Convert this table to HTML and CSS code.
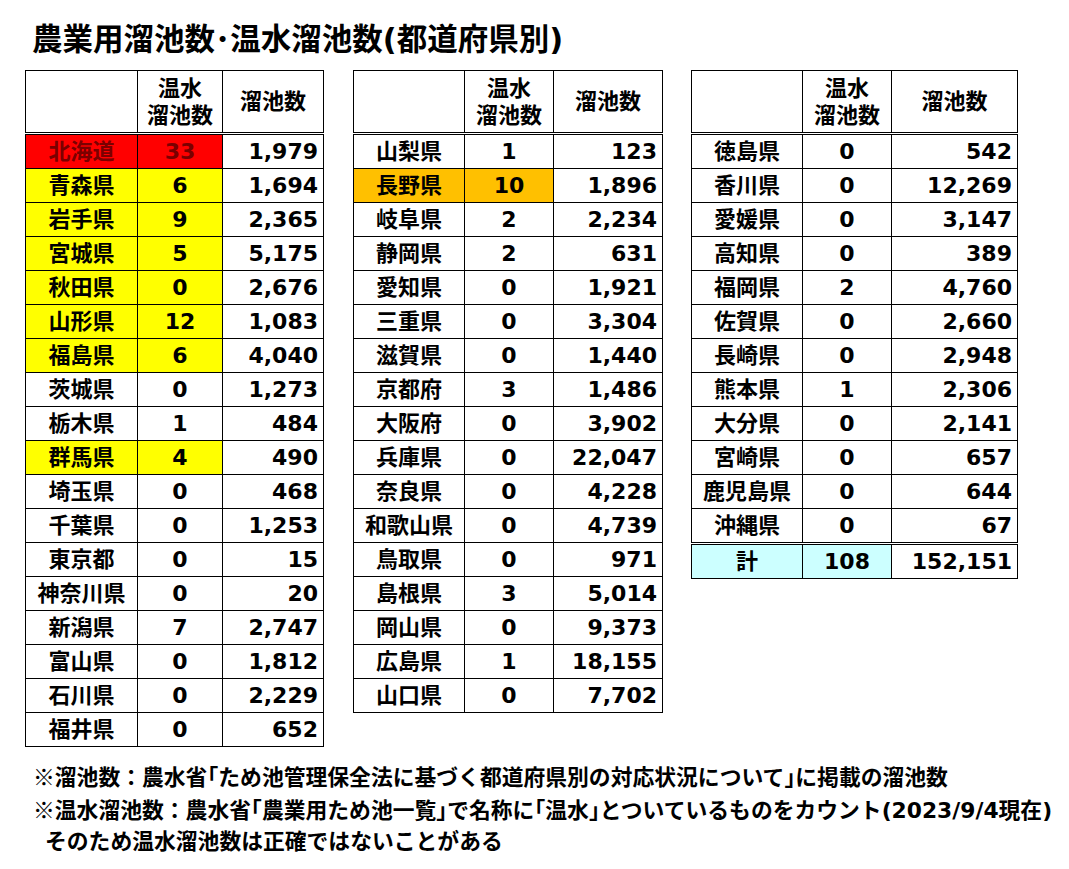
FILE: index.html
```html
<!DOCTYPE html>
<html lang="ja">
<head>
<meta charset="utf-8">
<title>農業用溜池数・温水溜池数(都道府県別)</title>
<link rel="stylesheet" href="styles.css">
</head>
<body>
<div class="page">
  <h1 class="title">農業用溜池数<span class="dot">･</span>温水溜池数(都道府県別)</h1>
  <div class="tables">
    <table class="tbl t1">
      <colgroup><col class="c1"><col class="c2"><col class="c3"></colgroup>
      <thead>
        <tr><th></th><th>温水<br>溜池数</th><th>溜池数</th></tr>
      </thead>
      <tbody>
        <tr><td class="name red">北海道</td><td class="cnt red">33</td><td class="num">1,979</td></tr>
        <tr><td class="name yel">青森県</td><td class="cnt yel">6</td><td class="num">1,694</td></tr>
        <tr><td class="name yel">岩手県</td><td class="cnt yel">9</td><td class="num">2,365</td></tr>
        <tr><td class="name yel">宮城県</td><td class="cnt yel">5</td><td class="num">5,175</td></tr>
        <tr><td class="name yel">秋田県</td><td class="cnt yel">0</td><td class="num">2,676</td></tr>
        <tr><td class="name yel">山形県</td><td class="cnt yel">12</td><td class="num">1,083</td></tr>
        <tr><td class="name yel">福島県</td><td class="cnt yel">6</td><td class="num">4,040</td></tr>
        <tr><td class="name">茨城県</td><td class="cnt">0</td><td class="num">1,273</td></tr>
        <tr><td class="name">栃木県</td><td class="cnt">1</td><td class="num">484</td></tr>
        <tr><td class="name yel">群馬県</td><td class="cnt yel">4</td><td class="num">490</td></tr>
        <tr><td class="name">埼玉県</td><td class="cnt">0</td><td class="num">468</td></tr>
        <tr><td class="name">千葉県</td><td class="cnt">0</td><td class="num">1,253</td></tr>
        <tr><td class="name">東京都</td><td class="cnt">0</td><td class="num">15</td></tr>
        <tr><td class="name">神奈川県</td><td class="cnt">0</td><td class="num">20</td></tr>
        <tr><td class="name">新潟県</td><td class="cnt">7</td><td class="num">2,747</td></tr>
        <tr><td class="name">富山県</td><td class="cnt">0</td><td class="num">1,812</td></tr>
        <tr><td class="name">石川県</td><td class="cnt">0</td><td class="num">2,229</td></tr>
        <tr><td class="name">福井県</td><td class="cnt">0</td><td class="num">652</td></tr>
      </tbody>
    </table>
    <table class="tbl t2">
      <colgroup><col class="c1"><col class="c2"><col class="c3"></colgroup>
      <thead>
        <tr><th></th><th>温水<br>溜池数</th><th>溜池数</th></tr>
      </thead>
      <tbody>
        <tr><td class="name">山梨県</td><td class="cnt">1</td><td class="num">123</td></tr>
        <tr><td class="name org">長野県</td><td class="cnt org">10</td><td class="num">1,896</td></tr>
        <tr><td class="name">岐阜県</td><td class="cnt">2</td><td class="num">2,234</td></tr>
        <tr><td class="name">静岡県</td><td class="cnt">2</td><td class="num">631</td></tr>
        <tr><td class="name">愛知県</td><td class="cnt">0</td><td class="num">1,921</td></tr>
        <tr><td class="name">三重県</td><td class="cnt">0</td><td class="num">3,304</td></tr>
        <tr><td class="name">滋賀県</td><td class="cnt">0</td><td class="num">1,440</td></tr>
        <tr><td class="name">京都府</td><td class="cnt">3</td><td class="num">1,486</td></tr>
        <tr><td class="name">大阪府</td><td class="cnt">0</td><td class="num">3,902</td></tr>
        <tr><td class="name">兵庫県</td><td class="cnt">0</td><td class="num">22,047</td></tr>
        <tr><td class="name">奈良県</td><td class="cnt">0</td><td class="num">4,228</td></tr>
        <tr><td class="name">和歌山県</td><td class="cnt">0</td><td class="num">4,739</td></tr>
        <tr><td class="name">鳥取県</td><td class="cnt">0</td><td class="num">971</td></tr>
        <tr><td class="name">島根県</td><td class="cnt">3</td><td class="num">5,014</td></tr>
        <tr><td class="name">岡山県</td><td class="cnt">0</td><td class="num">9,373</td></tr>
        <tr><td class="name">広島県</td><td class="cnt">1</td><td class="num">18,155</td></tr>
        <tr><td class="name">山口県</td><td class="cnt">0</td><td class="num">7,702</td></tr>
      </tbody>
    </table>
    <table class="tbl t3">
      <colgroup><col class="c1"><col class="c2"><col class="c3"></colgroup>
      <thead>
        <tr><th></th><th>温水<br>溜池数</th><th>溜池数</th></tr>
      </thead>
      <tbody>
        <tr><td class="name">徳島県</td><td class="cnt">0</td><td class="num">542</td></tr>
        <tr><td class="name">香川県</td><td class="cnt">0</td><td class="num">12,269</td></tr>
        <tr><td class="name">愛媛県</td><td class="cnt">0</td><td class="num">3,147</td></tr>
        <tr><td class="name">高知県</td><td class="cnt">0</td><td class="num">389</td></tr>
        <tr><td class="name">福岡県</td><td class="cnt">2</td><td class="num">4,760</td></tr>
        <tr><td class="name">佐賀県</td><td class="cnt">0</td><td class="num">2,660</td></tr>
        <tr><td class="name">長崎県</td><td class="cnt">0</td><td class="num">2,948</td></tr>
        <tr><td class="name">熊本県</td><td class="cnt">1</td><td class="num">2,306</td></tr>
        <tr><td class="name">大分県</td><td class="cnt">0</td><td class="num">2,141</td></tr>
        <tr><td class="name">宮崎県</td><td class="cnt">0</td><td class="num">657</td></tr>
        <tr><td class="name">鹿児島県</td><td class="cnt">0</td><td class="num">644</td></tr>
        <tr><td class="name">沖縄県</td><td class="cnt">0</td><td class="num">67</td></tr>
        <tr class="total"><td class="name cyan">計</td><td class="cnt cyan">108</td><td class="num">152,151</td></tr>
      </tbody>
    </table>
  </div>
  <div class="notes">
    <p class="note"><span class="cjk">※</span>溜池数：農水省<span class="hw">「</span>ため池管理保全法に基づく都道府県別の対応状況について<span class="hw">」</span>に掲載の溜池数</p>
    <p class="note"><span class="cjk">※</span>温水溜池数：農水省<span class="hw">「</span>農業用ため池一覧<span class="hw">」</span>で名称に<span class="hw">「</span>温水<span class="hw">」</span>とついているものをカウント(2023/9/4現在)</p>
    <p class="note indent">そのため温水溜池数は正確ではないことがある</p>
  </div>
</div>
</body>
</html>
```

FILE: styles.css
```css
html, body {
  margin: 0;
  padding: 0;
  background: #ffffff;
}

body {
  font-family: "DejaVu Sans", "Noto Sans CJK JP", sans-serif;
  font-weight: 700;
  color: #000000;
}

.page {
  padding: 19px 0 0 25px;
}

.title {
  margin: 0 0 12px 7px;
  font-size: 30.5px;
  line-height: 36px;
  font-weight: 700;
  white-space: nowrap;
}

.dot {
  font-family: "Noto Sans CJK JP", sans-serif;
}

.tables {
  display: flex;
  align-items: flex-start;
}

.tbl {
  border-collapse: collapse;
  table-layout: fixed;
  font-size: 22px;
}

.tbl th,
.tbl td {
  border: 1px solid #000000;
  padding: 0;
  white-space: nowrap;
}

.tbl th {
  height: 61px;
  line-height: 27px;
  font-weight: 700;
  text-align: center;
  vertical-align: middle;
  border-bottom: 3px double #000000;
}

.tbl td {
  height: 33px;
  line-height: 33px;
  vertical-align: middle;
}

.t1 { width: 298px; margin-right: 29px; }
.t1 .c1 { width: 112px; }
.t1 .c2 { width: 85px; }
.t1 .c3 { width: 101px; }

.t2 { width: 309px; margin-right: 28px; }
.t2 .c1 { width: 111px; }
.t2 .c2 { width: 89px; }
.t2 .c3 { width: 109px; }

.t3 { width: 326px; }
.t3 .c1 { width: 111px; }
.t3 .c2 { width: 89px; }
.t3 .c3 { width: 126px; }

.name,
.cnt {
  text-align: center;
}

.num {
  text-align: right;
  padding-right: 5px !important;
}

.red {
  background: #ff0000;
  color: #7a0000;
}

.yel {
  background: #ffff00;
}

.org {
  background: #ffc000;
}

.cyan {
  background: #ccffff;
}

.total td {
  border-top: 3px double #000000;
}

.notes {
  margin: 13px 0 0 8px;
  font-size: 21.8px;
  line-height: 31px;
}

.note {
  margin: 0;
  white-space: nowrap;
}

.indent {
  padding-left: 12px;
}

.cjk {
  font-family: "Noto Sans CJK JP", sans-serif;
}

.hw {
  font-family: "Noto Sans CJK JP", sans-serif;
  font-feature-settings: "halt" 1;
}
```
